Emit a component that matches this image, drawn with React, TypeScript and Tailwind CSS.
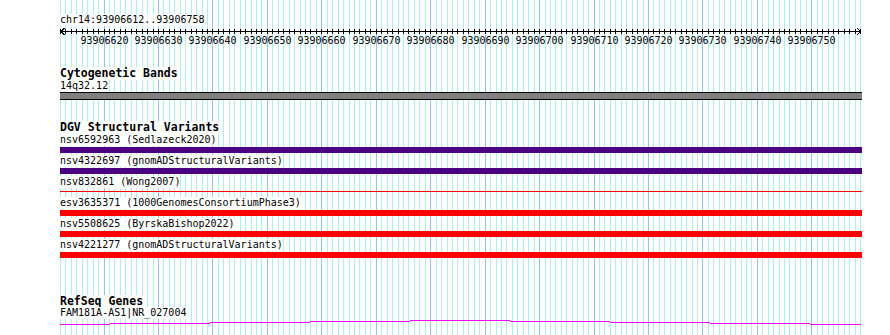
import React from "react";

const X0 = 60;
const STEP = 5.444;
const N = 147;
const xs = Array.from({ length: N + 1 }, (_, i) => Math.round(X0 + i * STEP));

function Grid() {
  return (
    <svg
      className="absolute left-0 top-0"
      width={890}
      height={335}
      shapeRendering="crispEdges"
    >
      {xs.map((x, i) => (
        <line
          key={i}
          x1={x + 0.5}
          x2={x + 0.5}
          y1={0}
          y2={335}
          stroke={(i - 8) % 10 === 0 ? "#8ec4ee" : "#aeeef0"}
          strokeWidth={1}
        />
      ))}
    </svg>
  );
}

function Ruler() {
  const labels = [];
  for (let i = 8; i <= N; i += 10) {
    labels.push({ x: xs[i] - X0 + 0.5, v: 93906612 + i });
  }
  return (
    <svg width={802} height={20} shapeRendering="crispEdges" className="block">
      <line x1={0} x2={801} y1={5.5} y2={5.5} stroke="#000" />
      {xs.map((x, i) => (
        <line
          key={i}
          x1={x - X0 + 0.5}
          x2={x - X0 + 0.5}
          y1={3}
          y2={8}
          stroke="#000"
        />
      ))}
      <polyline points="4.5,2 1,5.5 4.5,9" fill="none" stroke="#000" />
      <polyline points="797,2 800.5,5.5 797,9" fill="none" stroke="#000" />
      {labels.map((l) => (
        <text
          key={l.v}
          x={l.x}
          y={18}
          textAnchor="middle"
          fontSize={10}
          fontFamily="'DejaVu Sans Mono', monospace"
          fill="#000"
        >
          {l.v}
        </text>
      ))}
    </svg>
  );
}

function Label({ children }: { children: React.ReactNode }) {
  return (
    <div className="h-[12px] text-[10px] leading-[12px] text-black whitespace-nowrap">
      <span className="inline-block bg-white">{children}</span>
    </div>
  );
}

function Title({ children, h = "h-[13px]" }: { children: React.ReactNode; h?: string }) {
  return (
    <div className={`${h} text-[11.5px] leading-[13px] font-bold text-black whitespace-nowrap`}>
      <span className="inline-block bg-white">{children}</span>
    </div>
  );
}

type Row = { name: string; kind: "purple" | "red" | "thin" };
const rows: Row[] = [
  { name: "nsv6592963 (Sedlazeck2020)", kind: "purple" },
  { name: "nsv4322697 (gnomADStructuralVariants)", kind: "purple" },
  { name: "nsv832861 (Wong2007)", kind: "thin" },
  { name: "esv3635371 (1000GenomesConsortiumPhase3)", kind: "red" },
  { name: "nsv5508625 (ByrskaBishop2022)", kind: "red" },
  { name: "nsv4221277 (gnomADStructuralVariants)", kind: "red" },
];

function VariantRow({ row }: { row: Row }) {
  return (
    <div className="flex flex-col h-[21px]">
      <Label>{row.name}</Label>
      <div className="h-[6px] mt-[1px] flex flex-col">
        {row.kind === "purple" && <div className="h-[6px] bg-[#4b0082]" />}
        {row.kind === "red" && <div className="h-[6px] bg-[#ff0000]" />}
        {row.kind === "thin" && <div className="h-[1px] mt-[2px] bg-[#ff0000]" />}
      </div>
    </div>
  );
}

function Gene() {
  const segs: [number, number, number][] = [
    [60, 110, 324],
    [110, 210, 323],
    [210, 310, 322],
    [310, 410, 321],
    [410, 510, 320],
    [510, 610, 321],
    [610, 710, 322],
    [710, 810, 323],
    [810, 861, 324],
  ];
  return (
    <svg width={802} height={16} shapeRendering="crispEdges" className="block">
      {segs.map(([a, b, y], i) => (
        <line
          key={i}
          x1={a - X0}
          x2={b - X0}
          y1={y - 319 + 0.5}
          y2={y - 319 + 0.5}
          stroke="#ff00ff"
          strokeWidth={1}
        />
      ))}
    </svg>
  );
}

export default function App() {
  return (
    <div className="relative w-[890px] h-[335px] bg-white overflow-hidden font-['DejaVu_Sans_Mono',monospace]">
      <Grid />
      <div className="relative flex flex-col pl-[60px] pt-[14px] w-[862px]">
        <Label>chr14:93906612..93906758</Label>
        <Ruler />
        <div className="mt-[21px] flex flex-col">
          <Title>Cytogenetic Bands</Title>
          <Label>14q32.12</Label>
          <div className="h-[8px] border-y border-black bg-[#808080]" />
        </div>
        <div className="mt-[21px] flex flex-col">
          <Title>DGV Structural Variants</Title>
          {rows.map((r) => (
            <VariantRow key={r.name} row={r} />
          ))}
        </div>
        <div className="mt-[35px] flex flex-col">
          <Title h="h-[12px]">RefSeq Genes</Title>
          <Label>FAM181A-AS1|NR_027004</Label>
          <Gene />
        </div>
      </div>
    </div>
  );
}
